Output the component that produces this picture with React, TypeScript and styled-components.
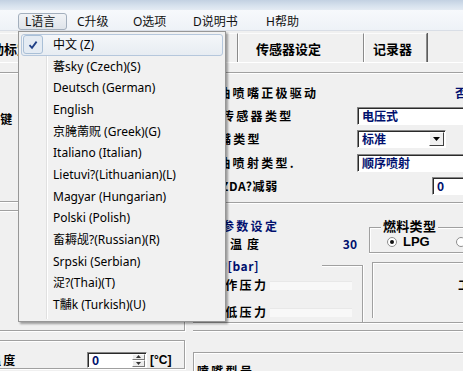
import React from 'react';
import styled, { createGlobalStyle } from 'styled-components';

const GlobalStyle = createGlobalStyle`
	html, body {
		margin: 0;
		padding: 0;
	}
	body {
		background: #f0f0f0;
		font-family: "Noto Sans", "Noto Sans CJK SC", sans-serif;
	}
`;

const Window = styled.div`
	position: relative;
	width: 463px;
	height: 371px;
	overflow: hidden;
	background: #f0f0f0;
`;

const TitleStrip = styled.div`
	height: 10px;
	background: linear-gradient(180deg, #c3d1e2 0%, #d6e1ed 55%, #e4ebf3 100%);
`;

const MenuBar = styled.div`
	display: flex;
	gap: 3px;
	height: 21px;
	box-sizing: border-box;
	padding: 3px 0 0 18px;
	background: linear-gradient(180deg, #f7f9fc, #eef2f7);
	border-bottom: 1px solid #d9dee6;
`;

const MenuItem = styled.div<{ $w: number; $open?: boolean }>`
	width: ${(p) => p.$w}px;
	height: 17px;
	box-sizing: border-box;
	padding-left: 6px;
	font: 12px/15px "Noto Sans", "Noto Sans CJK SC", sans-serif;
	color: #111;
	border: 1px solid ${(p) => (p.$open ? '#a3afbd' : 'transparent')};
	border-radius: 3px;
	background: ${(p) => (p.$open ? 'linear-gradient(180deg, #f1f3f6, #dfe4ea)' : 'transparent')};
	white-space: nowrap;
`;

const TabStrip = styled.div`
	display: flex;
	height: 32px;
	box-sizing: border-box;
	padding-top: 2px;
	margin-left: -28px;
	border-bottom: 1px solid #ffffff;
`;

const Tab = styled.div<{ $w: number; $pad: number }>`
	width: ${(p) => p.$w}px;
	box-sizing: border-box;
	padding-left: ${(p) => p.$pad}px;
	border-top: 1px solid #fbfbfb;
	border-left: 1px solid #ffffff;
	border-right: 1px solid #8a8a8a;
	box-shadow: 1px 0 0 #5c5c5c;
	font: 700 13px/29px "Noto Sans CJK SC", sans-serif;
	color: #000;
	white-space: nowrap;
`;

const Body = styled.div`
	display: grid;
	grid-template-columns: 187px 1fr;
	column-gap: 6px;
`;

const Column = styled.div`
	display: flex;
	flex-direction: column;
	min-width: 0;
`;

const Frame = styled.div<{ $mt: number; $h?: number }>`
	margin-top: ${(p) => p.$mt}px;
	height: ${(p) => (p.$h ? `${p.$h}px` : 'auto')};
	box-sizing: border-box;
	border: 1px solid #a0a0a0;
	box-shadow: inset 1px 1px 0 #ffffff, 1px 1px 0 #ffffff;
`;

const LeftFrame = styled(Frame)`
	margin-left: -4px;
	width: 189px;
`;

const RightFrame = styled(Frame)`
	margin-right: -6px;
`;

const BoldLabel = styled.span<{ $indent?: number; $color?: string; $ls?: number }>`
	padding-left: ${(p) => p.$indent ?? 0}px;
	font: 700 12px/16px "Noto Sans CJK SC", sans-serif;
	letter-spacing: ${(p) => p.$ls ?? 2.3}px;
	color: ${(p) => p.$color ?? '#000'};
	white-space: nowrap;
`;

const SetRow = styled.div`
	display: grid;
	grid-template-columns: 163px 1fr;
	align-items: center;
	height: 23.3px;
`;

const Field = styled.div<{ $w: number; $ml?: number }>`
	width: ${(p) => p.$w}px;
	margin-left: ${(p) => p.$ml ?? 0}px;
	height: 18px;
	box-sizing: border-box;
	display: flex;
	align-items: center;
	padding-left: 4px;
	background: #ffffff;
	border-top: 1px solid #868686;
	border-left: 1px solid #868686;
	border-bottom: 1px solid #ffffff;
	border-right: 1px solid #ffffff;
	box-shadow: inset 1px 1px 0 #2a2a2a;
	font: 700 12px/16px "Noto Sans CJK SC", sans-serif;
	color: #00106e;
	white-space: nowrap;
`;

const Combo = styled(Field)`
	justify-content: space-between;
	padding-right: 1px;
`;

const DropButton = styled.div`
	width: 15px;
	height: 14px;
	box-sizing: border-box;
	display: flex;
	align-items: center;
	justify-content: center;
	background: #f0f0f0;
	border-top: 1px solid #ffffff;
	border-left: 1px solid #ffffff;
	border-right: 1px solid #404040;
	border-bottom: 1px solid #404040;
`;

const ValueText = styled.span`
	font: 700 12px/16px "Noto Sans CJK SC", sans-serif;
	color: #00106e;
	white-space: nowrap;
`;

const NoText = styled(ValueText)`
	margin-left: 98px;
`;

const TempValue = styled(ValueText)`
	margin-left: auto;
	margin-right: 8px;
`;

const ParamGrid = styled.div`
	display: grid;
	grid-template-columns: 172px 1fr;
	height: 120px;
	box-sizing: border-box;
	border-bottom: 1px solid #a0a0a0;
	box-shadow: 0 1px 0 #ffffff;
	margin-right: -6px;
`;

const ParamColumn = styled.div`
	display: flex;
	flex-direction: column;
`;

const ParamRow = styled.div<{ $mt: number }>`
	display: flex;
	align-items: center;
	height: 16px;
	flex-shrink: 0;
	margin-top: ${(p) => p.$mt}px;
`;

const FrameCorner = styled.div`
	align-self: flex-end;
	margin-left: auto;
	margin-right: 2px;
	width: 40px;
	height: 8px;
	border-top: 1px solid #a0a0a0;
	border-right: 1px solid #a0a0a0;
	box-shadow: inset 0 1px 0 #ffffff, 1px 0 0 #ffffff;
`;

const PressBlock = styled.div`
	flex: 1;
	margin-right: 2px;
	border-right: 1px solid #a0a0a0;
	box-shadow: 1px 0 0 #ffffff;
`;

const GhostField = styled.div`
	margin-left: auto;
	margin-right: 10px;
	width: 82px;
	height: 8px;
	background: #f8f8f8;
	border-top: 1px solid #e8e8e8;
`;

const FuelBox = styled.div`
	margin: 24px 0 0 4px;
	height: 26px;
	box-sizing: border-box;
	padding-left: 14px;
	border: 1px solid #a0a0a0;
	border-right: none;
	box-shadow: inset 1px 1px 0 #ffffff, 0 1px 0 #ffffff;
`;

const Legend = styled.div`
	width: fit-content;
	height: 15px;
	margin: -10px 0 0 -3px;
	padding: 0 2px;
	background: #f0f0f0;
	font: 700 13px/15px "Noto Sans CJK SC", sans-serif;
	letter-spacing: 0.3px;
	color: #000;
`;

const RadioRow = styled.div`
	display: flex;
	align-items: center;
	gap: 6px;
	height: 14px;
	margin: 2px 0 0 3px;
`;

const Radio = styled.span<{ $on?: boolean }>`
	width: 10px;
	height: 10px;
	box-sizing: border-box;
	border-radius: 50%;
	background: #ffffff;
	border: 1px solid #8e8e8e;
	display: flex;
	align-items: center;
	justify-content: center;

	&::after {
		content: '';
		width: 4px;
		height: 4px;
		border-radius: 50%;
		background: ${(p) => (p.$on ? '#111' : 'transparent')};
	}
`;

const RadioText = styled.span<{ $mr?: number }>`
	font: 700 13px/14px "Liberation Sans", sans-serif;
	margin-right: ${(p) => p.$mr ?? 0}px;
`;

const ModeBox = styled.div`
	margin: 9px -6px 0 7px;
	height: 56px;
	box-sizing: border-box;
	border-top: 1px solid #a0a0a0;
	border-left: 1px solid #a0a0a0;
	box-shadow: inset 1px 1px 0 #ffffff;
	padding: 10px 0 0 85px;
`;

const Divider = styled.div<{ $mt: number }>`
	margin-top: ${(p) => p.$mt}px;
	margin-right: -6px;
	height: 1px;
	background: #a0a0a0;
	box-shadow: 0 1px 0 #ffffff;
`;

const KeyRow = styled.div`
	padding-top: 34px;
	margin-left: -11px;
`;

const SpinRow = styled.div`
	display: grid;
	grid-template-columns: 88px 60px 1fr;
	align-items: center;
	column-gap: 2px;
	padding-top: 11px;

	& > span:first-child {
		margin-left: -8px;
	}
`;

const SpinField = styled(Field)`
	height: 16px;
	justify-content: space-between;
	padding-right: 1px;
`;

const SpinButtons = styled.div`
	display: flex;
	flex-direction: column;
	width: 13px;
	height: 13px;

	& span {
		flex: 1;
		background: #ececec;
		border-top: 1px solid #fff;
		border-left: 1px solid #fff;
		border-right: 1px solid #7a7a7a;
		border-bottom: 1px solid #7a7a7a;
		display: flex;
		align-items: center;
		justify-content: center;
	}
`;

const Unit = styled.span`
	font: 700 12px/16px "Liberation Sans", sans-serif;
	margin-left: 1px;
`;

const NozzleBox = styled(RightFrame)`
	padding-top: 6px;
	border-bottom: none;
`;

/* dropdown overlay */
const Dropdown = styled.div`
	position: absolute;
	left: 18px;
	top: 31px;
	width: 208px;
	height: 291px;
	box-sizing: border-box;
	padding: 2px;
	background: #f1f1f1;
	border: 1px solid #979797;
	box-shadow: 2px 2px 2px rgba(0, 0, 0, 0.35);

	&::before {
		content: '';
		position: absolute;
		left: 27px;
		top: 2px;
		bottom: 2px;
		width: 1px;
		background: #e0e0e0;
		box-shadow: 1px 0 0 #ffffff;
	}
`;

const DropItem = styled.div<{ $active?: boolean }>`
	position: relative;
	height: 21.7px;
	box-sizing: border-box;
	padding-left: 31px;
	display: flex;
	align-items: center;
	font: 12px/16px "Noto Sans", "Noto Sans CJK SC", sans-serif;
	color: #000;
	white-space: nowrap;
	border: 1px solid ${(p) => (p.$active ? '#b5c7dc' : 'transparent')};
	border-radius: 3px;
	background: ${(p) => (p.$active ? 'linear-gradient(180deg, #f4f6f9, #e7ecf2)' : 'transparent')};
`;

const CheckBox = styled.span`
	position: absolute;
	left: 1px;
	top: 0px;
	width: 20px;
	height: 19px;
	box-sizing: border-box;
	border: 1px solid #a9bfd6;
	border-radius: 3px;
	background: #e4ebf3;
	display: flex;
	align-items: center;
	justify-content: center;
`;

const menus = [
	{ label: 'L语言', w: 49, open: true },
	{ label: 'C升级', w: 53 },
	{ label: 'O选项', w: 57 },
	{ label: 'D说明书', w: 70 },
	{ label: 'H帮助', w: 50 },
];

const tabs = [
	{ label: '自动标定', w: 110, pad: 5 },
	{ label: '喷嘴校正', w: 156, pad: 17 },
	{ label: '传感器设定', w: 126, pad: 17 },
	{ label: '记录器', w: 63, pad: 8 },
];

const languages = [
	'中文 (Z)',
	'蕃sky (Czech)(S)',
	'Deutsch (German)',
	'English',
	'京腌萳贶 (Greek)(G)',
	'Italiano (Italian)',
	'Lietuvi?(Lithuanian)(L)',
	'Magyar (Hungarian)',
	'Polski (Polish)',
	'畜耨觇?(Russian)(R)',
	'Srpski (Serbian)',
	'浞?(Thai)(T)',
	'T黼k (Turkish)(U)',
];

function App() {
	return (
		<Window>
			<GlobalStyle />
			<TitleStrip />
			<MenuBar>
				{menus.map((m) => (
					<MenuItem key={m.label} $w={m.w} $open={m.open}>{m.label}</MenuItem>
				))}
			</MenuBar>
			<TabStrip>
				{tabs.map((t) => (
					<Tab key={t.label} $w={t.w} $pad={t.pad}>{t.label}</Tab>
				))}
			</TabStrip>
			<Body>
				<Column>
					<LeftFrame $mt={9} $h={130}>
						<KeyRow>
							<BoldLabel>按键</BoldLabel>
						</KeyRow>
					</LeftFrame>
					<LeftFrame $mt={8} $h={121} />
					<LeftFrame $mt={9}>
						<SpinRow>
							<BoldLabel>温度</BoldLabel>
							<SpinField $w={60}>
								0
								<SpinButtons>
									<span><svg width="5" height="3" viewBox="0 0 5 3"><path d="M0 3 L2.5 0 L5 3Z" fill="#333" /></svg></span>
									<span><svg width="5" height="3" viewBox="0 0 5 3"><path d="M0 0 L5 0 L2.5 3Z" fill="#333" /></svg></span>
								</SpinButtons>
							</SpinField>
							<Unit>[°C]</Unit>
						</SpinRow>
					</LeftFrame>
				</Column>
				<Column>
					<RightFrame $mt={9} $h={131} style={{ paddingTop: 8 }}>
						<SetRow>
							<BoldLabel $indent={10}>燃油喷嘴正极驱动</BoldLabel>
							<NoText>否</NoText>
						</SetRow>
						<SetRow>
							<BoldLabel $indent={28}>传感器类型</BoldLabel>
							<Field $w={120}>电压式</Field>
						</SetRow>
						<SetRow>
							<BoldLabel $indent={25}>嘴类型</BoldLabel>
							<Combo $w={89}>
								标准
								<DropButton>
									<svg width="7" height="4" viewBox="0 0 7 4"><path d="M0 0 L7 0 L3.5 4Z" fill="#000" /></svg>
								</DropButton>
							</Combo>
						</SetRow>
						<SetRow>
							<BoldLabel $indent={10}>汽油喷射类型.</BoldLabel>
							<Field $w={120}>顺序喷射</Field>
						</SetRow>
						<SetRow>
							<BoldLabel $indent={27} $ls={0.6}>ZDA?减弱</BoldLabel>
							<Field $w={50} $ml={75}>0</Field>
						</SetRow>
					</RightFrame>
					<ParamGrid>
						<ParamColumn>
							<ParamRow $mt={15}>
								<BoldLabel $indent={29} $color="#00106e">参数设定</BoldLabel>
							</ParamRow>
							<ParamRow $mt={2}>
								<BoldLabel $indent={20} $ls={5}>水温度</BoldLabel>
								<TempValue>30</TempValue>
							</ParamRow>
							<ParamRow $mt={6}>
								<BoldLabel $indent={22} $color="#00106e" $ls={0.5}>力[bar]</BoldLabel>
								<FrameCorner />
							</ParamRow>
							<PressBlock>
								<ParamRow $mt={3}>
									<BoldLabel $indent={18}>工作压力</BoldLabel>
									<GhostField />
								</ParamRow>
								<ParamRow $mt={11}>
									<BoldLabel $indent={18}>最低压力</BoldLabel>
									<GhostField />
								</ParamRow>
							</PressBlock>
						</ParamColumn>
						<div>
							<FuelBox>
								<Legend>燃料类型</Legend>
								<RadioRow>
									<Radio $on />
									<RadioText $mr={20}>LPG</RadioText>
									<Radio />
									<RadioText>CNG</RadioText>
								</RadioRow>
							</FuelBox>
							<ModeBox>
								<BoldLabel>工作模式</BoldLabel>
							</ModeBox>
						</div>
					</ParamGrid>
					<Divider $mt={7} />
					<NozzleBox $mt={21}>
						<BoldLabel $indent={3}>喷嘴型号</BoldLabel>
					</NozzleBox>
				</Column>
			</Body>
			<Dropdown>
				{languages.map((lang, i) => (
					<DropItem key={lang} $active={i === 0}>
						{i === 0 && (
							<CheckBox>
								<svg width="10" height="10" viewBox="0 0 10 10">
									<path d="M1.5 5.2 L4 7.8 L8.6 1.6" fill="none" stroke="#1f3f86" strokeWidth="1.8" />
								</svg>
							</CheckBox>
						)}
						{lang}
					</DropItem>
				))}
			</Dropdown>
		</Window>
	);
}

export default App;
